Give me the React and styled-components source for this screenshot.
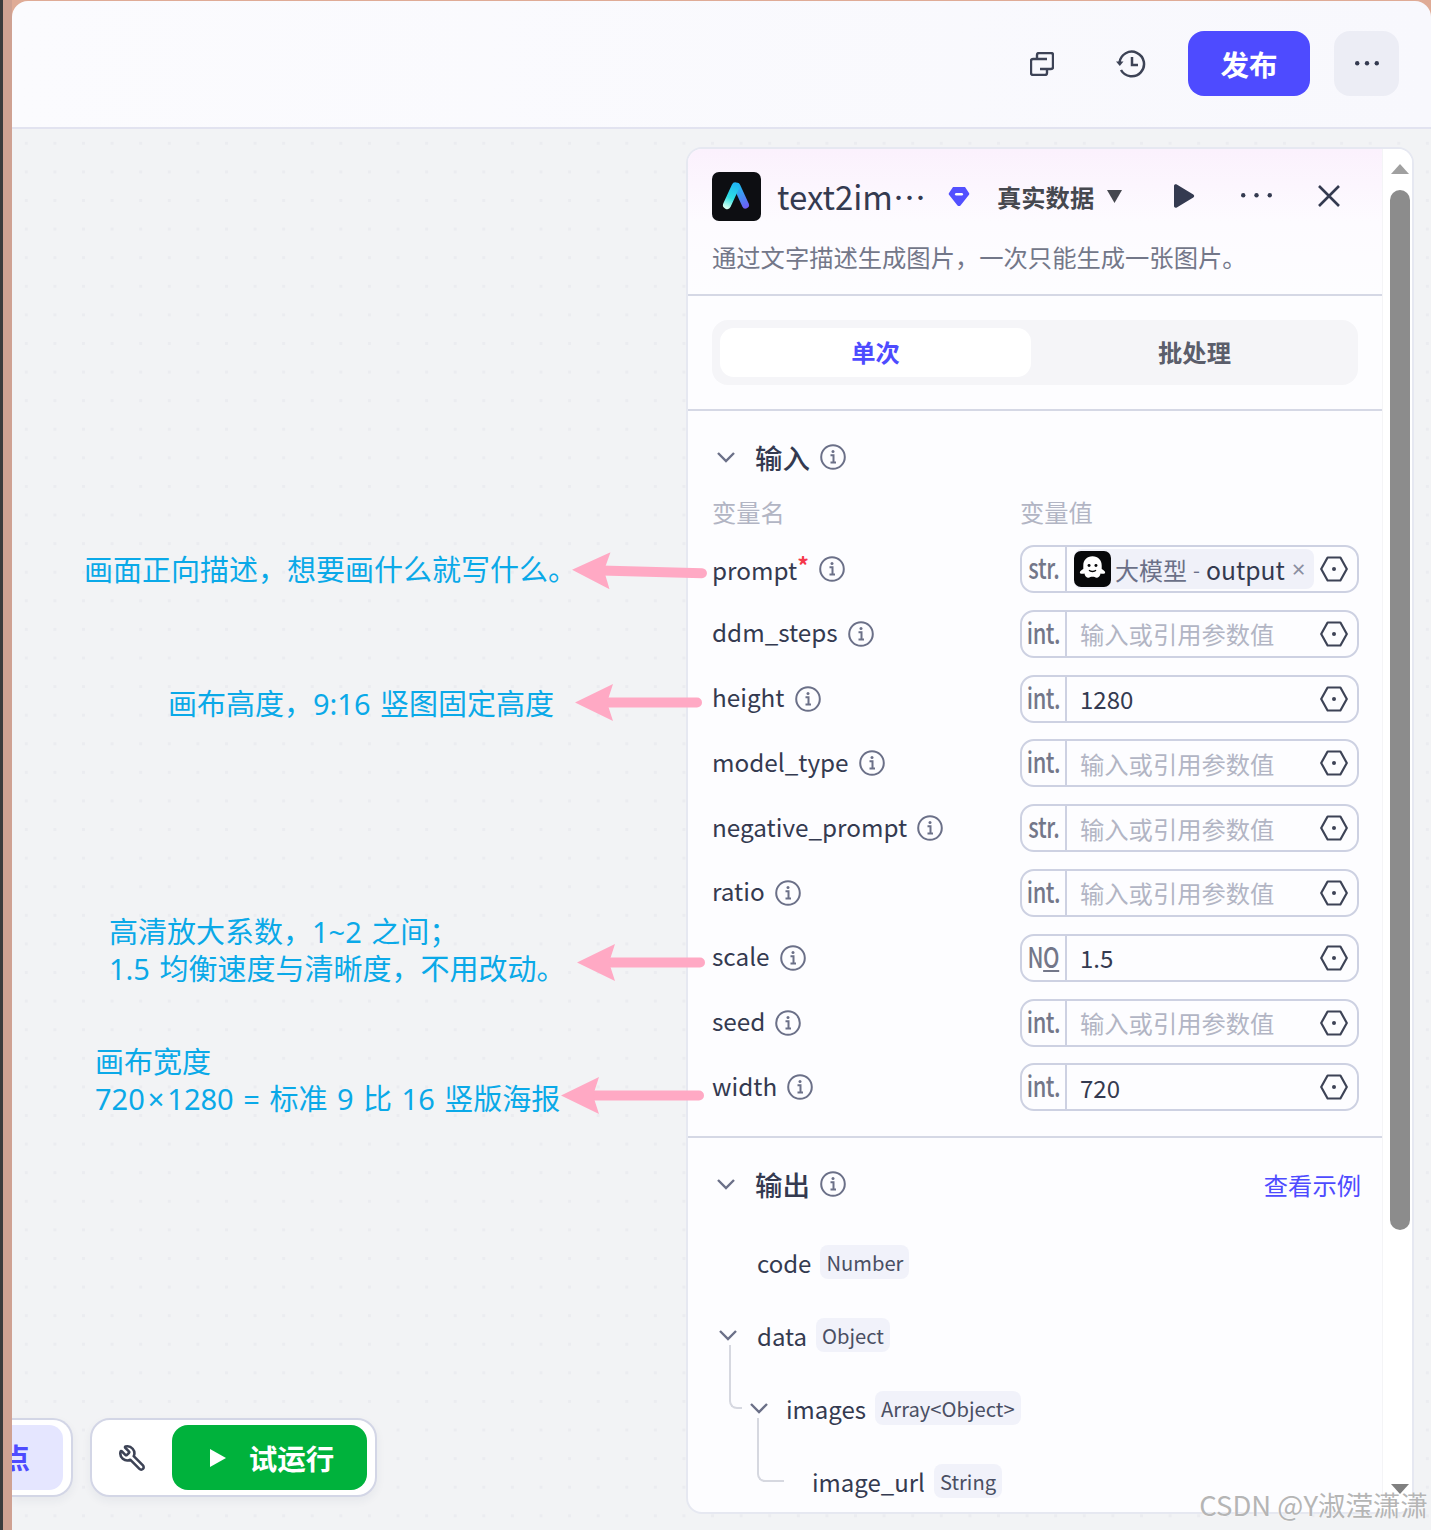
import styled, { createGlobalStyle } from "styled-components";
import { Wrench } from "lucide-react";

const Times = styled.span`
  margin: 0 3px;
`;

const fields = [
  { name: "prompt", required: true, type: "str.", ref: true },
  { name: "ddm_steps", type: "int." },
  { name: "height", type: "int.", value: "1280" },
  { name: "model_type", type: "int." },
  { name: "negative_prompt", type: "str." },
  { name: "ratio", type: "int." },
  { name: "scale", type: "no", value: "1.5" },
  { name: "seed", type: "int." },
  { name: "width", type: "int.", value: "720" },
];

const notes = [
  { left: 84, top: 552, lines: ["画面正向描述，想要画什么就写什么。"] },
  { left: 168, top: 686, lines: ["画布高度，9:16 竖图固定高度"] },
  { left: 109, top: 914, lines: ["高清放大系数，1~2 之间；", "1.5 均衡速度与清晰度，不用改动。"] },
  {
    left: 95,
    top: 1044,
    lines: [
      "画布宽度",
      <>
        720<Times>×</Times>1280 = 标准 9 比 16 竖版海报
      </>,
    ],
  },
];

const arrows = [
  { left: 572, top: 553, width: 135, tilt: 1.5 },
  { left: 575, top: 684, width: 127, tilt: 0 },
  { left: 577, top: 944, width: 128, tilt: 0 },
  { left: 561, top: 1077, width: 143, tilt: 0 },
];

const Info = () => (
  <svg width="26" height="26" viewBox="0 0 26 26" fill="none" stroke="#6b7088">
    <circle cx="13" cy="13" r="11.8" strokeWidth="2" />
    <path d="M10.5 11.2h3v7M10.5 18.6h5.5" strokeWidth="2" />
    <circle cx="13" cy="7.6" r="1.5" fill="#6b7088" stroke="none" />
  </svg>
);

const Hex = () => (
  <svg width="28" height="26" viewBox="0 0 28 26" fill="none">
    <path d="M7.6 1.5h12.8L26.8 13l-6.4 11.5H7.6L1.2 13z" stroke="#3d4356" strokeWidth="2.2" strokeLinejoin="round" />
    <circle cx="14" cy="13" r="2" fill="#3d4356" />
  </svg>
);

const Chevron = () => (
  <svg width="20" height="12" viewBox="0 0 20 12" fill="none">
    <path d="M2 2l8 8 8-8" stroke="#6b7088" strokeWidth="2.4" />
  </svg>
);

const DotsIcon = ({ width, r }) => (
  <svg width={width} height={r * 2} viewBox={`0 0 ${width} ${r * 2}`} fill="#343a50">
    <circle cx={r} cy={r} r={r} />
    <circle cx={width / 2} cy={r} r={r} />
    <circle cx={width - r} cy={r} r={r} />
  </svg>
);

const Logo = () => (
  <svg width="49" height="49" viewBox="0 0 49 49" fill="none">
    <defs>
      <linearGradient id="logoLeft" gradientUnits="userSpaceOnUse" x1="13" y1="35" x2="23" y2="11">
        <stop offset="0" stopColor="#d4fff0" />
        <stop offset="0.4" stopColor="#2fe0e2" />
        <stop offset="1" stopColor="#1fb4f6" />
      </linearGradient>
      <linearGradient id="logoRight" gradientUnits="userSpaceOnUse" x1="24" y1="14" x2="36" y2="36">
        <stop offset="0" stopColor="#1cc0f0" />
        <stop offset="1" stopColor="#7258f6" />
      </linearGradient>
    </defs>
    <rect width="49" height="49" rx="7" fill="#0d0e12" />
    <path d="M25 14.500L33.500 33" stroke="url(#logoRight)" strokeWidth="7" strokeLinecap="round" />
    <path d="M23.500 14.500L15 33" stroke="url(#logoLeft)" strokeWidth="8" strokeLinecap="round" />
  </svg>
);

const Ghost = () => (
  <svg width="37" height="36" viewBox="0 0 37 36">
    <rect width="37" height="36" rx="7" fill="#07080a" />
    <g transform="translate(18.500 18) scale(1.150) translate(-18.500 -18)">
      <path
        d="M18.500 7c-5 0-8 3.500-8 8v3c-1.500 1-3 2-3 3 0 1.500 2.500 1.300 4 1 .5 2.500 2 4 3.500 3.500 1.200-.3 2-.8 3.500-.8s2.300.5 3.500.8c1.500.5 3-1 3.500-3.500 1.500.3 4 .5 4-1 0-1-1.500-2-3-3v-3c0-4.500-3-8-8-8z"
        fill="#fff"
      />
      <circle cx="15.500" cy="15" r="1.300" fill="#07080a" />
      <circle cx="21.500" cy="15" r="1.300" fill="#07080a" />
      <path d="M15.500 19c1.500 1.500 4.500 1.500 6 0" stroke="#07080a" strokeWidth="1.200" fill="none" />
    </g>
  </svg>
);

const Arrow = ({ width }) => (
  <svg width={width} height="37" viewBox={`0 0 ${width} 37`}>
    <path d={`M20 18.500H${width - 5}`} stroke="#ffa9c4" strokeWidth="10" strokeLinecap="round" />
    <path d="M0 18.500L38 0l-6 18.500L38 37z" fill="#ffa9c4" />
  </svg>
);

export default function App() {
  return (
    <>
      <GlobalStyle />
      <Page>
        <Strip />
        <Main>
          <Header>
            <IconButton>
              <svg width="24" height="24" viewBox="0 0 24 24" fill="none" stroke="#3d4356" strokeWidth="2.400">
                <path d="M17 16v5a2 2 0 0 1-2 2H3a2 2 0 0 1-2-2V9a2 2 0 0 1 2-2h14" />
                <path d="M7 7V3a2 2 0 0 1 2-2h12a2 2 0 0 1 2 2v12a2 2 0 0 1-2 2H10" />
              </svg>
            </IconButton>
            <IconButton>
              <svg width="30" height="30" viewBox="0 0 30 30" fill="none" stroke="#3d4356" strokeWidth="2.500">
                <path d="M3.500 13.500A12.300 12.300 0 1 1 5 21" />
                <path d="M16 8v8h6" />
                <path d="M0 12.500h7.500L3.800 17z" fill="#3d4356" stroke="none" />
              </svg>
            </IconButton>
            <PublishButton>发布</PublishButton>
            <MoreButton>
              <DotsIcon width={24} r={2.200} />
            </MoreButton>
          </Header>

          <Canvas>
            {notes.map((note) => (
              <Note key={note.left} $left={note.left} $top={note.top}>
                {note.lines.map((line, i) => (
                  <div key={i}>{line}</div>
                ))}
              </Note>
            ))}
            {arrows.map((arrow) => (
              <ArrowSlot key={arrow.top} $left={arrow.left} $top={arrow.top} $tilt={arrow.tilt}>
                <Arrow width={arrow.width} />
              </ArrowSlot>
            ))}

            <Dock>
              <DockCard $clipped>
                <AddNode>点</AddNode>
              </DockCard>
              <DockCard>
                <WrenchSlot>
                  <Wrench size={28} color="#3d4356" strokeWidth={2.2} style={{ transform: "scaleX(-1)" }} />
                </WrenchSlot>
                <RunButton>
                  <svg width="18" height="18" viewBox="0 0 18 18">
                    <path d="M1 0l16 9-16 9z" fill="#fff" />
                  </svg>
                  试运行
                </RunButton>
              </DockCard>
            </Dock>

            <Panel>
              <PanelBody>
                <PanelHead>
                  <TitleRow>
                    <Logo />
                    <PluginName>text2image</PluginName>
                    <svg width="22" height="21" viewBox="0 0 22 21">
                      <path d="M5 1h12l4 6c.4.7.4 1.500-.2 2.100L12.500 19.500c-.8.8-2.200.8-3 0L1.200 9.100C.6 8.500.6 7.700 1 7z" fill="#5350ff" />
                      <rect x="7" y="7" width="8" height="2.400" rx="1.200" fill="#fff" />
                    </svg>
                    <DataMode>
                      真实数据
                      <svg width="15" height="13" viewBox="0 0 15 13">
                        <path d="M0 0h15L7.500 13z" fill="#46484f" />
                      </svg>
                    </DataMode>
                    <HeadActions>
                      <svg width="22" height="24" viewBox="0 0 22 24">
                        <path d="M1 2c0-1.500 1.500-2.200 2.800-1.400l16.500 10c1.200.7 1.200 2.100 0 2.800L3.800 23.400C2.500 24.200 1 23.500 1 22z" fill="#343a50" />
                      </svg>
                      <DotsIcon width={31} r={2.200} />
                      <svg width="24" height="24" viewBox="0 0 24 24">
                        <path d="M2 2l20 20M22 2L2 22" stroke="#343a50" strokeWidth="2.600" />
                      </svg>
                    </HeadActions>
                  </TitleRow>
                  <Description>通过文字描述生成图片，一次只能生成一张图片。</Description>
                </PanelHead>

                <TabArea>
                  <Tabs>
                    <Tab $active>单次</Tab>
                    <Tab>批处理</Tab>
                  </Tabs>
                </TabArea>

                <InputSection>
                  <SectionTitle>
                    <Chevron />
                    <SectionName>输入</SectionName>
                    <Info />
                  </SectionTitle>
                  <ColumnHeads>
                    <span>变量名</span>
                    <span>变量值</span>
                  </ColumnHeads>
                  <FieldList>
                    {fields.map((field) => (
                      <FieldRow key={field.name}>
                        <FieldName>
                          <FieldLabel>
                            {field.name}
                            {field.required && <Required>*</Required>}
                          </FieldLabel>
                          <Info />
                        </FieldName>
                        <Field>
                          <FieldType>
                            <TypeText>
                              {field.type === "no" ? (
                                <>
                                  N<UnderO>O</UnderO>
                                </>
                              ) : (
                                field.type
                              )}
                            </TypeText>
                          </FieldType>
                          <FieldValue>
                            {field.ref ? (
                              <RefChip>
                                <Ghost />
                                <RefNode>大模型</RefNode>
                                <RefDash>-</RefDash>
                                <RefOutput>output</RefOutput>
                                <RefClose>×</RefClose>
                              </RefChip>
                            ) : field.value ? (
                              <ValueText>{field.value}</ValueText>
                            ) : (
                              <Placeholder>输入或引用参数值</Placeholder>
                            )}
                          </FieldValue>
                          <HexSlot>
                            <Hex />
                          </HexSlot>
                        </Field>
                      </FieldRow>
                    ))}
                  </FieldList>
                </InputSection>

                <OutputSection>
                  <OutputHead>
                    <SectionTitle>
                      <Chevron />
                      <SectionName>输出</SectionName>
                      <Info />
                    </SectionTitle>
                    <ExampleLink>查看示例</ExampleLink>
                  </OutputHead>
                  <TreeRow $indent={0}>
                    <CaretSlot />
                    <TreeName>code</TreeName>
                    <TypeTag>Number</TypeTag>
                  </TreeRow>
                  <TreeRow $indent={0}>
                    <CaretSlot>
                      <Chevron />
                    </CaretSlot>
                    <TreeName>data</TreeName>
                    <TypeTag>Object</TypeTag>
                  </TreeRow>
                  <TreeRow $indent={31} $lineLeft={17} $lineWidth={13}>
                    <CaretSlot $narrow>
                      <Chevron />
                    </CaretSlot>
                    <TreeName>images</TreeName>
                    <TypeTag>Array&lt;Object&gt;</TypeTag>
                  </TreeRow>
                  <TreeRow $indent={55} $lineLeft={45} $lineWidth={27}>
                    <CaretSlot />
                    <TreeName>image_url</TreeName>
                    <TypeTag>String</TypeTag>
                  </TreeRow>
                </OutputSection>
              </PanelBody>

              <ScrollTrack>
                <ScrollArrow />
                <ScrollThumb />
                <ScrollArrow $down />
              </ScrollTrack>
            </Panel>
          </Canvas>
        </Main>
        <Watermark>CSDN @Y淑滢潇潇</Watermark>
      </Page>
    </>
  );
}

const GlobalStyle = createGlobalStyle`
  body {
    margin: 0;
    font-family: "Noto Sans CJK SC", "Noto Sans", sans-serif;
    color: #343a50;
  }
`;

const Page = styled.div`
  position: relative;
  display: flex;
  width: 1431px;
  height: 1530px;
  overflow: hidden;
  background: #dfab96;
`;

const Strip = styled.div`
  width: 12px;
  flex: none;
  background: linear-gradient(90deg, #3a3a3c 0 3px, #cfa192 3px);
`;

const Main = styled.div`
  flex: 1;
  display: flex;
  flex-direction: column;
  margin-top: 1px;
  border-radius: 16px 16px 0 0;
  overflow: hidden;
`;

const Header = styled.header`
  height: 128px;
  flex: none;
  box-sizing: border-box;
  display: flex;
  align-items: center;
  justify-content: flex-end;
  padding: 0 32px 0 0;
  background: linear-gradient(90deg, #fbfbfe, #f8f8fd);
  border-bottom: 2px solid #e2e3f0;
`;

const IconButton = styled.div`
  width: 40px;
  height: 40px;
  margin-right: 49px;
  display: flex;
  align-items: center;
  justify-content: center;
`;

const PublishButton = styled.button`
  width: 122px;
  height: 65px;
  margin: 0 0 1px -12px;
  border: 0;
  border-radius: 16px;
  background: #4e4bff;
  color: #fff;
  font: 700 28.500px "Noto Sans CJK SC", sans-serif;
`;

const MoreButton = styled.button`
  width: 65px;
  height: 65px;
  margin: 0 0 1px 24px;
  padding: 0;
  display: flex;
  align-items: center;
  justify-content: center;
  border: 0;
  border-radius: 16px;
  background: #ecedf5;
`;

const Canvas = styled.main`
  position: relative;
  flex: 1;
  background-color: #f2f3f5;
  background-image: radial-gradient(#ebecf0 1.5px, transparent 1.5px);
  background-size: 28.6px 28.6px;
`;

const Note = styled.div`
  position: absolute;
  left: ${(p) => p.$left - 12}px;
  top: ${(p) => p.$top - 129}px;
  color: #0aa9e8;
  font-family: "Noto Sans", "Noto Sans CJK SC", sans-serif;
  font-size: 29px;
  line-height: 36.5px;
  word-spacing: 2px;
  white-space: nowrap;
`;

const ArrowSlot = styled.div`
  position: absolute;
  z-index: 2;
  left: ${(p) => p.$left - 12}px;
  top: ${(p) => p.$top - 129}px;
  transform: rotate(${(p) => p.$tilt}deg);
  line-height: 0;
`;

const Dock = styled.div`
  position: absolute;
  left: 0;
  top: 1289px;
  display: flex;
  gap: 17px;
`;

const DockCard = styled.div`
  height: 79px;
  display: flex;
  align-items: center;
  justify-content: flex-end;
  padding: 0 8px;
  box-sizing: border-box;
  background: #fff;
  border: 2px solid #d3d6e6;
  border-radius: ${(p) => (p.$clipped ? "0 20px 20px 0" : "20px")};
  border-left-width: ${(p) => (p.$clipped ? 0 : "2px")};
  width: ${(p) => (p.$clipped ? "61px" : "287px")};
  box-shadow: 0 4px 10px rgba(40, 50, 90, 0.06);
`;

const AddNode = styled.div`
  width: 52px;
  height: 65px;
  margin-left: -8px;
  border-radius: 0 14px 14px 0;
  background: #e5e6ff;
  color: #4e4bff;
  font-size: 28px;
  font-weight: 700;
  line-height: 65px;
  text-indent: -10px;
  overflow: hidden;
`;

const WrenchSlot = styled.div`
  flex: 1;
  display: flex;
  justify-content: center;
  padding-right: 8px;
`;

const RunButton = styled.button`
  width: 195px;
  height: 65px;
  display: flex;
  align-items: center;
  justify-content: center;
  gap: 22px;
  padding-left: 10px;
  border: 0;
  border-radius: 16px;
  background: #00b23c;
  color: #fff;
  font: 700 28.500px "Noto Sans CJK SC", sans-serif;
`;

const Panel = styled.section`
  position: absolute;
  left: 674px;
  top: 18px;
  width: 728px;
  height: 1367px;
  display: flex;
  box-sizing: border-box;
  background: #fdfdff;
  border: 2px solid #e6e8f1;
  border-radius: 16px;
  overflow: hidden;
`;

const PanelBody = styled.div`
  flex: 1;
  min-width: 0;
  display: flex;
  flex-direction: column;
`;

const PanelHead = styled.div`
  height: 147px;
  flex: none;
  box-sizing: border-box;
  padding: 23px 24px 0;
  background: linear-gradient(180deg, #fbf1fd 0%, #fdfbff 50%, #fdfdff 100%);
  border-bottom: 2px solid #d5d8e5;
`;

const TitleRow = styled.div`
  display: flex;
  align-items: center;
  height: 49px;
`;

const PluginName = styled.div`
  width: 152px;
  flex: none;
  margin: -2px 19px 0 16px;
  font-size: 33px;
  color: #343a50;
  overflow: hidden;
  white-space: nowrap;
  text-overflow: ellipsis;
`;

const DataMode = styled.div`
  display: flex;
  align-items: center;
  flex: none;
  gap: 13px;
  margin-left: 27px;
  font-size: 24.300px;
  font-weight: 700;
  color: #46484f;
  white-space: nowrap;
`;

const HeadActions = styled.div`
  display: flex;
  align-items: center;
  gap: 45.500px;
  margin: -2px 0 0 51px;
`;

const Description = styled.p`
  margin: 18px 0 0;
  font-size: 24.300px;
  line-height: 36px;
  color: #737789;
`;

const TabArea = styled.div`
  height: 115px;
  flex: none;
  box-sizing: border-box;
  padding: 24px 24px 0;
  border-bottom: 2px solid #d5d8e5;
`;

const Tabs = styled.div`
  height: 65px;
  display: grid;
  grid-template-columns: 311px 1fr;
  box-sizing: border-box;
  padding: 8px;
  background: #f5f5f8;
  border-radius: 16px;
`;

const Tab = styled.div`
  display: flex;
  align-items: center;
  justify-content: center;
  border-radius: 14px;
  padding: 0 0 2px ${(p) => (p.$active ? 0 : "8px")};
  font-size: 24.300px;
  font-weight: 700;
  background: ${(p) => (p.$active ? "#fff" : "transparent")};
  color: ${(p) => (p.$active ? "#4e4bff" : "#5b5e6b")};
`;

const InputSection = styled.div`
  height: 727px;
  flex: none;
  box-sizing: border-box;
  padding: 28px 24px 0;
  border-bottom: 2px solid #d5d8e5;
`;

const SectionTitle = styled.div`
  display: flex;
  align-items: center;
  height: 36px;
  padding-left: 4px;
`;

const SectionName = styled.span`
  margin: 0 9.500px 0 19px;
  font-size: 27.500px;
  font-weight: 500;
  color: #343a50;
`;

const ColumnHeads = styled.div`
  display: grid;
  grid-template-columns: 308px 1fr;
  margin-top: 19px;
  font-size: 24.300px;
  line-height: 36px;
  color: #b2b5c4;
`;

const FieldList = styled.div`
  display: flex;
  flex-direction: column;
  gap: 16.800px;
  margin-top: 15px;
`;

const FieldRow = styled.div`
  display: grid;
  grid-template-columns: 308px 339px;
  align-items: center;
  height: 48px;
`;

const FieldName = styled.div`
  display: flex;
  align-items: center;
  gap: 10px;
  font-size: 24.300px;
  color: #343a50;
`;

const FieldLabel = styled.span`
  margin-bottom: 4px;
`;

const Required = styled.span`
  color: #f5384b;
  vertical-align: 5px;
  font-size: 23px;
  font-weight: 700;
`;

const Field = styled.div`
  height: 48px;
  display: flex;
  align-items: center;
  box-sizing: border-box;
  border: 2px solid #cdd1e2;
  border-radius: 14px;
`;

const FieldType = styled.div`
  width: 45px;
  height: 100%;
  flex: none;
  box-sizing: border-box;
  display: flex;
  align-items: center;
  justify-content: center;
  padding-bottom: 4px;
  border-right: 2px solid #cdd1e2;
  font-size: 28px;
  font-weight: 500;
  color: #737789;
`;

const TypeText = styled.span`
  display: inline-block;
  transform: scaleX(0.78);
  letter-spacing: -0.500px;
  white-space: nowrap;
`;

const UnderO = styled.span`
  text-decoration: underline;
  text-decoration-thickness: 2px;
  text-underline-offset: 2px;
`;

const FieldValue = styled.div`
  flex: 1;
  min-width: 0;
  display: flex;
  align-items: center;
  padding-left: 13px;
`;

const RefChip = styled.div`
  width: 240px;
  height: 40px;
  margin-left: -6px;
  display: flex;
  align-items: center;
  background: #f0f1f9;
  border-radius: 8px;
  white-space: nowrap;
`;

const RefNode = styled.span`
  margin-left: 4px;
  font-size: 24px;
  color: #6b7088;
`;

const RefDash = styled.span`
  margin: 0 6px;
  font-size: 20px;
  color: #6b7088;
`;

const RefOutput = styled.span`
  font-size: 24.700px;
  color: #343a50;
`;

const RefClose = styled.span`
  margin-left: 7px;
  font-family: "Noto Sans", sans-serif;
  font-size: 24px;
  line-height: 1;
  color: #8a8e9f;
`;

const ValueText = styled.span`
  font-size: 24px;
  color: #343a50;
`;

const Placeholder = styled.span`
  font-size: 24.300px;
  color: #b2b5c4;
  white-space: nowrap;
`;

const HexSlot = styled.div`
  width: 28px;
  flex: none;
  display: flex;
  padding-right: 9px;
  justify-content: center;
`;

const OutputSection = styled.div`
  flex: 1;
  padding: 28px 24px 0;
`;

const OutputHead = styled.div`
  display: flex;
  align-items: center;
  justify-content: space-between;
  margin-right: -3px;
  margin-bottom: 41px;
`;

const ExampleLink = styled.a`
  font-size: 24.300px;
  color: #4e4bff;
`;

const TreeRow = styled.div`
  position: relative;
  height: 38px;
  margin-bottom: 35px;
  display: flex;
  align-items: center;
  padding-left: ${(p) => p.$indent}px;

  ${(p) =>
    p.$lineLeft &&
    `
    &::before {
      content: "";
      position: absolute;
      left: ${p.$lineLeft}px;
      top: -44px;
      width: ${p.$lineWidth}px;
      height: 64px;
      box-sizing: border-box;
      border-left: 2px solid #d6d8e0;
      border-bottom: 2px solid #d6d8e0;
      border-bottom-left-radius: 8px;
    }
  `}
`;

const CaretSlot = styled.div`
  width: ${(p) => (p.$narrow ? "43px" : "45px")};
  flex: none;
  padding-left: 6px;
  box-sizing: border-box;
  display: flex;
`;

const TreeName = styled.span`
  margin-right: 9px;
  font-size: 24px;
  color: #343a50;
`;

const TypeTag = styled.span`
  padding: 0 6px;
  height: 34px;
  display: flex;
  align-items: center;
  background: #f1f2fa;
  border-radius: 8px;
  font-size: 20.200px;
  color: #4a4f63;
`;

const ScrollTrack = styled.div`
  position: relative;
  width: 29px;
  flex: none;
  background: #fff;
  border-left: 1px solid #f4f4f6;
`;

const ScrollThumb = styled.div`
  position: absolute;
  left: 7px;
  top: 41px;
  width: 20px;
  height: 1040px;
  border-radius: 10px;
  background: #8c8c8c;
`;

const ScrollArrow = styled.div`
  position: absolute;
  left: 8px;
  ${(p) => (p.$down ? "bottom: 18px;" : "top: 15px;")}
  width: 0;
  height: 0;
  border-left: 9px solid transparent;
  border-right: 9px solid transparent;
  ${(p) => (p.$down ? "border-top: 10px solid #808080;" : "border-bottom: 10px solid #a0a0a0;")}
`;

const Watermark = styled.div`
  position: absolute;
  right: 3px;
  bottom: 9px;
  font-size: 27.500px;
  line-height: 1.2;
  color: #b5b5b5;
  text-shadow: 0 0 2px #fff;
  white-space: nowrap;
`;
